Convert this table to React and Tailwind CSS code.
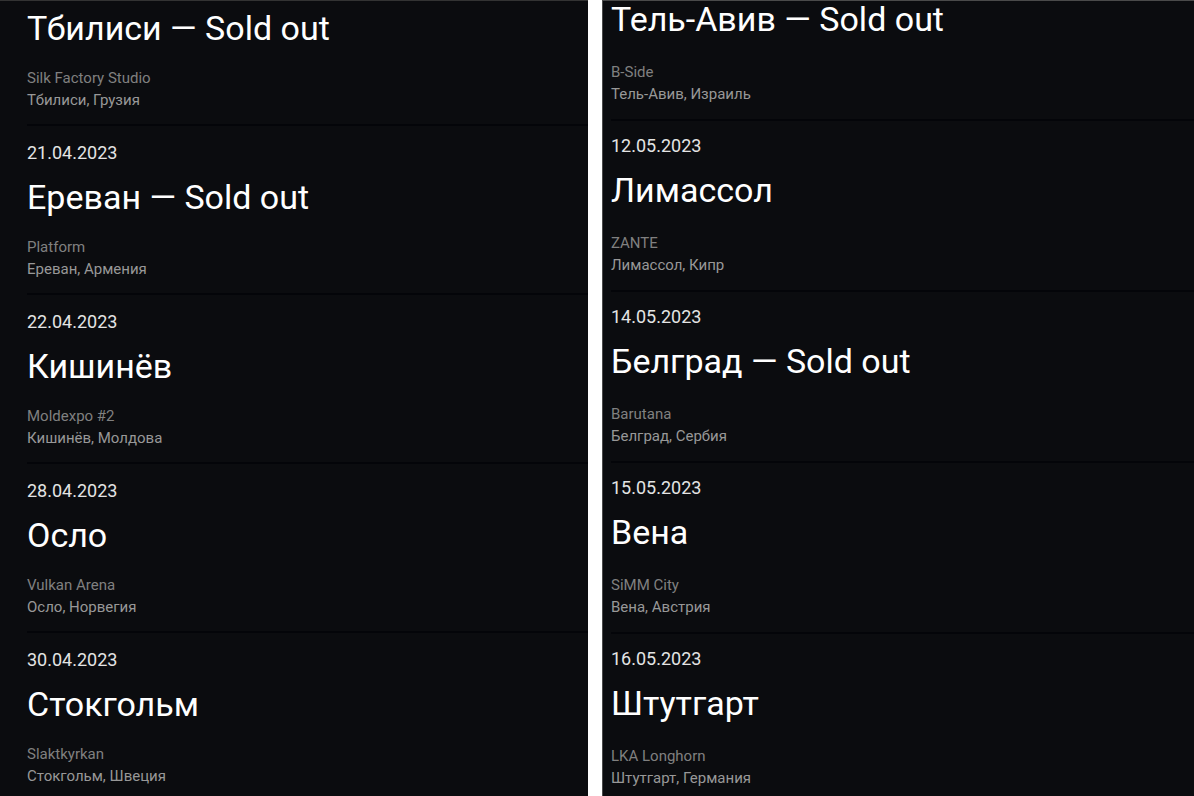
import React from 'react';

const LEFT = [
  { date: '19.04.2023', city: 'Тбилиси — Sold out', venue: 'Silk Factory Studio', place: 'Тбилиси, Грузия' },
  { date: '21.04.2023', city: 'Ереван — Sold out', venue: 'Platform', place: 'Ереван, Армения' },
  { date: '22.04.2023', city: 'Кишинёв', venue: 'Moldexpo #2', place: 'Кишинёв, Молдова' },
  { date: '28.04.2023', city: 'Осло', venue: 'Vulkan Arena', place: 'Осло, Норвегия' },
  { date: '30.04.2023', city: 'Стокгольм', venue: 'Slaktkyrkan', place: 'Стокгольм, Швеция' },
];

const RIGHT = [
  { date: '10.05.2023', city: 'Тель-Авив — Sold out', venue: 'B-Side', place: 'Тель-Авив, Израиль' },
  { date: '12.05.2023', city: 'Лимассол', venue: 'ZANTE', place: 'Лимассол, Кипр' },
  { date: '14.05.2023', city: 'Белград — Sold out', venue: 'Barutana', place: 'Белград, Сербия' },
  { date: '15.05.2023', city: 'Вена', venue: 'SiMM City', place: 'Вена, Австрия' },
  { date: '16.05.2023', city: 'Штутгарт', venue: 'LKA Longhorn', place: 'Штутгарт, Германия' },
];

const font = { fontFamily: 'Roboto, "Noto Sans", sans-serif' };

const EventRow = ({ item, wide }) => (
  <div
    className={
      'border-b-2 border-[#040509] ' +
      (wide ? 'pt-[13px] pb-[14px]' : 'pt-[15px] pb-[13px]')
    }
  >
    <div className="text-[18px] leading-6 text-[#e4e4e4]">{item.date}</div>
    <div className="mt-[12px] text-[34px] leading-[40px] text-white">{item.city}</div>
    <div className={(wide ? 'mt-[22px]' : 'mt-[19px]') + ' text-[15px] leading-[22px] text-[#808080]'}>
      {item.venue}
    </div>
    <div className="text-[15px] leading-[22px] text-[#989898]">{item.place}</div>
  </div>
);

const App = () => {
  return (
    <div className="flex h-[796px] w-[1194px] gap-[14px] overflow-hidden bg-white" style={font}>
      <div className="h-full w-[588px] overflow-hidden border-t border-[#333] bg-[#0b0c0f]">
        <div className="-mt-[44px] pl-[27px]">
          {LEFT.map(item => (
            <EventRow key={item.date} item={item} />
          ))}
        </div>
      </div>
      <div className="h-full flex-1 overflow-hidden border-l border-t border-[#4a4a4a] bg-[#0b0c0f]">
        <div className="-mt-[51px] pl-[8px]">
          {RIGHT.map(item => (
            <EventRow key={item.date} item={item} wide />
          ))}
        </div>
      </div>
    </div>
  );
};

export default App;
